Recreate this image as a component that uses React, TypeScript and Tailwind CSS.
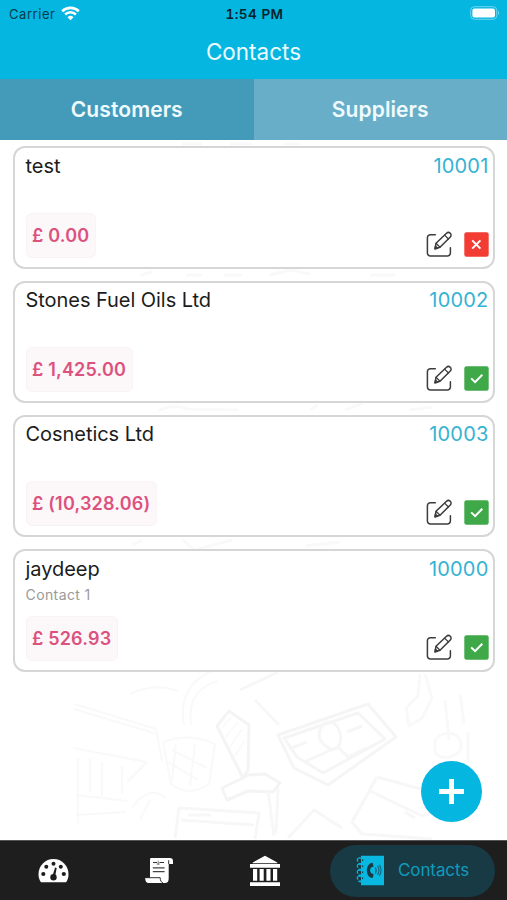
type Contact = {
  name: string;
  person?: string;
  code: string;
  balance: string;
  active: boolean;
};

const contacts: Contact[] = [
  { name: "test", code: "10001", balance: "£ 0.00", active: false },
  { name: "Stones Fuel Oils Ltd", code: "10002", balance: "£ 1,425.00", active: true },
  { name: "Cosnetics Ltd", code: "10003", balance: "£ (10,328.06)", active: true },
  { name: "jaydeep", person: "Contact 1", code: "10000", balance: "£ 526.93", active: true },
];

function StatusBar() {
  return (
    <div className="grid h-7 grid-cols-3 items-center pl-[9px] pr-[7px] text-[13px] text-[#063b4b]">
      <div className="flex items-center gap-1.5">
        <span className="pt-px tracking-[0.55px]">Carrier</span>
        <svg className="mb-0.5 h-[15px] w-[19px]" viewBox="0 0 19 15" fill="none" stroke="white">
          <path d="M1.2 5.2a12 12 0 0 1 16.6 0" strokeWidth="2.6" />
          <path d="M4.1 8.5a7.8 7.8 0 0 1 10.8 0" strokeWidth="2.5" />
          <path d="M9.5 14.3l-3-3.1a4.3 4.3 0 0 1 6 0z" fill="white" stroke="none" />
        </svg>
      </div>
      <span className="whitespace-nowrap pt-px text-center text-[13.5px] font-semibold tracking-[0.5px] text-[#03232d] tabular-nums">
        1:54 PM
      </span>
      <svg className="mb-0.5 h-[14px] w-[30px] justify-self-end" viewBox="0 0 30 14">
        <rect x="0.7" y="0.7" width="26" height="12.6" rx="3.6" fill="none" stroke="#6fd5ee" />
        <rect x="2.4" y="2.4" width="22.6" height="9.2" rx="2" fill="white" />
        <path d="M28 4.8c1.5.6 1.5 3.8 0 4.4z" fill="#6fd5ee" />
      </svg>
    </div>
  );
}

function EditIcon() {
  return (
    <svg
      className="h-[27px] w-[27px]"
      viewBox="0 0 27 27"
      fill="none"
      stroke="#3c3c3c"
      strokeWidth="1.5"
      strokeLinecap="round"
      strokeLinejoin="round"
    >
      <path d="M9.3 3.7H4.4a3 3 0 0 0-3 3V22a3 3 0 0 0 3 3h17a3 3 0 0 0 3-3v-5.3" />
      <path d="M9 17.8l1-5.5L20.5 2.3a2.6 2.6 0 0 1 3.8 3.7L14 16.2z" />
      <path d="M18.6 4.1l3.9 3.9M10 12.3l4 3.9" strokeWidth="1.2" />
      <path d="M9 17.8l.5-2.5 2 1.9z" fill="#3c3c3c" />
    </svg>
  );
}

function StatusIcon({ active }: { active: boolean }) {
  return (
    <svg className="h-[25px] w-[25px]" viewBox="0 0 25 25" fill="none" stroke="white" strokeWidth="2">
      <rect x="0.3" y="0.3" width="24.4" height="24.4" rx="2.2" fill={active ? "#3fa94a" : "#f23c34"} stroke="none" />
      {active ? <path d="M7.2 12.4l3.9 3.8 7.2-7.4" /> : <path d="M8.2 8.4l8.2 8.2M16.4 8.4l-8.2 8.2" />}
    </svg>
  );
}

function ContactCard({ contact }: { contact: Contact }) {
  return (
    <div className="flex h-[122.4px] shrink-0 flex-col justify-between rounded-[12px] border-2 border-[#d6d6d6] bg-white pb-[9px] pl-[10.5px] pr-[4.5px] pt-[3.5px]">
      <div className="flex items-start justify-between">
        <div>
          <h2 className="text-[20px] leading-[28px] tracking-[-0.05px] text-[#1c1c1c]">{contact.name}</h2>
          {contact.person && (
            <p className="mt-[2.5px] text-[14px] leading-[20px] tracking-[0.4px] text-[#9a9a9a]">{contact.person}</p>
          )}
        </div>
        <span className="text-[20px] leading-[28px] tracking-[0.2px] text-[#35b3d3]">{contact.code}</span>
      </div>
      <div className="flex items-end justify-between">
        <span className="rounded-md border border-[#f9f3f5] bg-[#fcf7f9] px-[5.5px] py-[9px] text-[18px] font-semibold leading-[25px] tracking-[0.18px] text-[#dc527f]">
          {contact.balance}
        </span>
        <div className="flex items-center gap-[11px]">
          <EditIcon />
          <StatusIcon active={contact.active} />
        </div>
      </div>
    </div>
  );
}

// faint pencil drawings behind the list
function Sketches() {
  return (
    <svg
      className="absolute inset-0 h-full w-full"
      viewBox="0 0 507 700"
      fill="none"
      stroke="#f9f9f9"
      strokeWidth="3"
      strokeLinejoin="round"
    >
      <g transform="translate(0 -140)">
        <path d="M182 144h20M230 144h22M284 144h16M140 275l12-3M186 275h16M224 275h18M270 275l20-5 20 4M370 275h25" />
        <path d="M158 411q15-8 30-2l50 1M310 410l8-5M345 410l18-7M410 410l22-3" />
        <path d="M182 539l12 11 38-10M132 545l10-5M305 546l35-4" />
        <path d="M74 704l30 9 52 16 6 32M74 709l80 24M73 748l74 14-20 20M78 758v65M90 758v34M102 762v34M122 766v28M76 795l52 6M76 815l50-3" strokeWidth="2" />
        <path d="M130 694q25-12 48-3M184 725c-5-30 8-45 28-54M191 725c-3-26 7-38 27-44M163 742q28-10 52 2l-6 40q-20 14-38 0z" strokeWidth="2" />
        <path d="M172 750l35 18M168 762l30 18M176 744l-4 36M195 744l-5 42M132 808q16-24 34-10M140 820l10-20" strokeWidth="2" />
        <path d="M217 726l12-15 20 14-1 45-5 8z" stroke="#f4f4f4" />
        <path d="M222 728l9-11M225 738l13-16M230 747l12-18M235 756l10-16" strokeWidth="1.5" />
        <path d="M243 778l-21 10 5 12 21-9 25 1 7-9-15-9-17 1-8 4" stroke="#f4f4f4" />
        <path d="M175 838l4-30 80 5-4 26M181 820l73 5M188 815h23M268 790l6 46M278 788l-2 45M240 690l38-18M255 700l24 25" stroke="#f7f7f7" />
        <path d="M278 735l90-31 28 33-68 48-34-17zM284 738l74-25 27 26-62 34-26-16z" stroke="#f5f5f5" />
        <path d="M320 730c3-12 17-10 20 3s-5 20-13 14-9-10-7-17zM289 749l18-7M347 732l15-6M304 762l34-15 10 10 18-9" stroke="#f6f6f6" />
        <path d="M420 674l-2 22-12 12 3 18 13-8 10-20-7-24M445 700l4 40M460 694l4 30M435 740c8-11 26-8 26 5s-20 16-26 8zM468 732v30" />
        <path d="M377 777l-25 45 10 12 70 5M377 777l62 17M368 790l54 26 25-8M288 838l26-28 28 18M405 812l10 6" stroke="#f7f7f7" />
      </g>
    </svg>
  );
}

function DashboardIcon() {
  return (
    <svg className="h-[27px] w-[33px]" viewBox="0 0 33 27">
      <path d="M4 25.2C2.3 23 1.5 20.4 1.5 17a15 15 0 0 1 30 0c0 3.4-.8 6-2.5 8.2z" fill="white" />
      <g fill="#1e1e1e">
        <circle cx="6.3" cy="17" r="2.1" />
        <circle cx="9.3" cy="9.8" r="2" />
        <circle cx="16.5" cy="6.8" r="2" />
        <circle cx="23.8" cy="9.8" r="2" />
        <circle cx="26.8" cy="17" r="2.1" />
        <circle cx="16.5" cy="20.3" r="3.2" />
        <path d="M15.6 18.5l2.5-8 1.6.5-1.6 8.3z" />
      </g>
    </svg>
  );
}

function InvoiceIcon() {
  return (
    <svg className="h-[28px] w-[31px]" viewBox="0 0 31 28">
      <path d="M7 1h18.8c2.2 0 3.2 1.2 3.2 3v3h-4.3v14.5c0 3-1.2 4.5-4 4.5H4.6C2.4 26 1.2 24.6 1.2 21H6V3.8C6 2 6.2 1 7 1z" fill="white" />
      <path d="M2 20.7h14.2c.1 3 .8 4.5 2.7 5M24.7 7V3.2M9 5.5h4M15.5 5.5h4.5" fill="none" stroke="#333" strokeWidth="1" />
      <path d="M8.8 10.8h11.8M8.8 14.7h11.8" stroke="#444" strokeWidth="1.3" />
      <path d="M14.2 3.8v4M12.7 7h3" stroke="#777" strokeWidth="1" />
    </svg>
  );
}

function BankIcon() {
  return (
    <svg className="h-[32px] w-[32px]" viewBox="0 0 32 32" fill="white">
      <path d="M16 .8l12.3 6.6v.8H3.7v-.8zM1 9h30v3.8H1zM1 27.2h30V31H1zM4 14h4.2v11.8H4zM10.6 14h4.1v11.8h-4.1zM17.4 14h4.1v11.8h-4.1zM24 14h4.2v11.8H24z" />
    </svg>
  );
}

function PhonebookIcon() {
  return (
    <svg className="h-[31px] w-[29px]" viewBox="0 0 29 31" fill="none">
      <path d="M5 .8h23v29.4H5v-3H2.5v-1.8H5v-4H2.5v-1.8H5v-4H2.5v-1.8H5v-4H2.5V8H5z" fill="#08b8e1" />
      <path d="M5.8 4.5a2.3 2 0 1 0-3.6 2M5.8 10.5a2.3 2 0 1 0-3.6 2M5.8 16.5a2.3 2 0 1 0-3.6 2M5.8 22.5a2.3 2 0 1 0-3.6 2" stroke="#08b8e1" strokeWidth="1.2" />
      <path d="M6 5.2h1.2M6 11.2h1.2M6 17.2h1.2M6 23.2h1.2" stroke="#173a45" strokeWidth="1.6" />
      <path d="M16.6 7.8c-7.6.2-7.6 15.4 0 15.2l1-3.8-2.6-1.2c-1.2-1.6-1.2-3.8 0-5.4l2.6-1z" fill="#173a45" />
      <path d="M19.3 12.5q1.8 3 0 6M21.5 10.8q3 4.7 0 9.2M23.4 9.8q3.4 5.7 0 11.3" stroke="#176780" strokeWidth="1.2" />
    </svg>
  );
}

function TabBar() {
  return (
    <nav className="flex h-[60px] shrink-0 items-center border-t border-[#555] bg-[#1e1e1e] pr-3">
      <button className="flex w-[107px] justify-center"><DashboardIcon /></button>
      <button className="flex w-[104px] justify-center"><InvoiceIcon /></button>
      <button className="flex w-[107px] justify-center"><BankIcon /></button>
      <button className="ml-auto flex h-[52px] w-[165px] items-center gap-[13px] rounded-full bg-[#173a45] pl-[26px] text-[17px] text-[#109bbd]">
        <PhonebookIcon />
        <span className="tracking-[-0.1px]">Contacts</span>
      </button>
    </nav>
  );
}

export default function App() {
  return (
    <div className="flex h-[900px] w-[507px] flex-col overflow-hidden bg-white font-['Inter',sans-serif]">
      <header className="h-[79px] shrink-0 bg-[#05b6e0]">
        <StatusBar />
        <h1 className="pt-[7px] text-center text-[22.5px] leading-[34px] text-[#ebfaff]">Contacts</h1>
      </header>

      <div className="grid h-[61px] shrink-0 grid-cols-2 text-[21px] font-semibold text-[#f0fbff]">
        <button className="bg-[#439bb9] pt-px tracking-[0.1px]">Customers</button>
        <button className="bg-[#69aec8] pt-px tracking-[0.1px]">Suppliers</button>
      </div>

      <main className="relative min-h-0 flex-1">
        <Sketches />
        <div className="relative flex flex-col gap-[11.9px] pl-[13px] pr-3 pt-[6.4px]">
          {contacts.map((contact) => (
            <ContactCard key={contact.code} contact={contact} />
          ))}
        </div>
        <button className="absolute bottom-[18px] right-[25px] flex h-[61px] w-[61px] items-center justify-center rounded-full bg-[#05b6e0]">
          <svg className="h-[25px] w-[25px]" viewBox="0 0 25 25" stroke="white" strokeWidth="5">
            <path d="M12.5 0v25M0 12.5h25" />
          </svg>
        </button>
      </main>

      <TabBar />
    </div>
  );
}
